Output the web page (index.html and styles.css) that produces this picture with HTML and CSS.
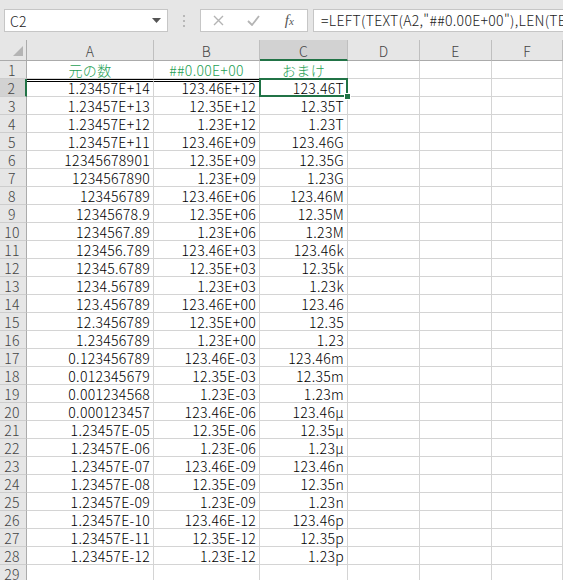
FILE: index.html
```html
<!DOCTYPE html>
<html lang="ja">
<head>
    <meta charset="UTF-8">
    <title>Sheet1</title>
    <link rel="stylesheet" href="styles.css">
</head>
<body>
    <div class="toolbar">
        <div class="name-box">
            <span>C2</span>
            <svg width="9" height="5" viewBox="0 0 9 5"><polygon points="0,0 9,0 4.5,5" fill="#555"/></svg>
        </div>
        <div class="grip">
            <svg width="3" height="12" viewBox="0 0 3 12"><rect x="0" y="0" width="2" height="2" fill="#b8b8b8"/><rect x="0" y="5" width="2" height="2" fill="#b8b8b8"/><rect x="0" y="10" width="2" height="2" fill="#b8b8b8"/></svg>
        </div>
        <div class="fx-buttons">
            <svg width="11" height="11" viewBox="0 0 11 11"><path d="M1 1 L10 10 M10 1 L1 10" stroke="#b4b4b4" stroke-width="1.4" fill="none"/></svg>
            <svg width="13" height="11" viewBox="0 0 13 11"><path d="M1 6 L5 10 L12 1" stroke="#b4b4b4" stroke-width="1.8" fill="none"/></svg>
            <span class="fx"><i>f</i><i class="sub">x</i></span>
        </div>
        <div class="formula">=LEFT(TEXT(A2,"##0.00E+00"),LEN(TEXT(A2,"##0.00E+00"))-4)</div>
    </div>

    <div class="sheet">
        <div class="row head">
            <div class="corner"><svg width="10" height="10" viewBox="0 0 10 10"><polygon points="10,0 10,10 0,10" fill="#b4b4b4"/></svg></div>
            <div>A</div><div>B</div><div class="sel">C</div><div>D</div><div>E</div><div>F</div>
        </div>
        <div class="row r1">
            <div class="rh">1</div><div class="title">元の数</div><div class="title">##0.00E+00</div><div class="title">おまけ</div><div></div><div></div><div></div>
        </div>
        <div class="row r2">
            <div class="rh sel">2</div><div>1.23457E+14</div><div>123.46E+12</div><div class="active">123.46T</div><div></div><div></div><div></div>
        </div>
        <div class="row"><div class="rh">3</div><div>1.23457E+13</div><div>12.35E+12</div><div>12.35T</div><div></div><div></div><div></div></div>
        <div class="row"><div class="rh">4</div><div>1.23457E+12</div><div>1.23E+12</div><div>1.23T</div><div></div><div></div><div></div></div>
        <div class="row"><div class="rh">5</div><div>1.23457E+11</div><div>123.46E+09</div><div>123.46G</div><div></div><div></div><div></div></div>
        <div class="row"><div class="rh">6</div><div>12345678901</div><div>12.35E+09</div><div>12.35G</div><div></div><div></div><div></div></div>
        <div class="row"><div class="rh">7</div><div>1234567890</div><div>1.23E+09</div><div>1.23G</div><div></div><div></div><div></div></div>
        <div class="row"><div class="rh">8</div><div>123456789</div><div>123.46E+06</div><div>123.46M</div><div></div><div></div><div></div></div>
        <div class="row"><div class="rh">9</div><div>12345678.9</div><div>12.35E+06</div><div>12.35M</div><div></div><div></div><div></div></div>
        <div class="row"><div class="rh">10</div><div>1234567.89</div><div>1.23E+06</div><div>1.23M</div><div></div><div></div><div></div></div>
        <div class="row"><div class="rh">11</div><div>123456.789</div><div>123.46E+03</div><div>123.46k</div><div></div><div></div><div></div></div>
        <div class="row"><div class="rh">12</div><div>12345.6789</div><div>12.35E+03</div><div>12.35k</div><div></div><div></div><div></div></div>
        <div class="row"><div class="rh">13</div><div>1234.56789</div><div>1.23E+03</div><div>1.23k</div><div></div><div></div><div></div></div>
        <div class="row"><div class="rh">14</div><div>123.456789</div><div>123.46E+00</div><div>123.46</div><div></div><div></div><div></div></div>
        <div class="row"><div class="rh">15</div><div>12.3456789</div><div>12.35E+00</div><div>12.35</div><div></div><div></div><div></div></div>
        <div class="row"><div class="rh">16</div><div>1.23456789</div><div>1.23E+00</div><div>1.23</div><div></div><div></div><div></div></div>
        <div class="row"><div class="rh">17</div><div>0.123456789</div><div>123.46E-03</div><div>123.46m</div><div></div><div></div><div></div></div>
        <div class="row"><div class="rh">18</div><div>0.012345679</div><div>12.35E-03</div><div>12.35m</div><div></div><div></div><div></div></div>
        <div class="row"><div class="rh">19</div><div>0.001234568</div><div>1.23E-03</div><div>1.23m</div><div></div><div></div><div></div></div>
        <div class="row"><div class="rh">20</div><div>0.000123457</div><div>123.46E-06</div><div>123.46μ</div><div></div><div></div><div></div></div>
        <div class="row"><div class="rh">21</div><div>1.23457E-05</div><div>12.35E-06</div><div>12.35μ</div><div></div><div></div><div></div></div>
        <div class="row"><div class="rh">22</div><div>1.23457E-06</div><div>1.23E-06</div><div>1.23μ</div><div></div><div></div><div></div></div>
        <div class="row"><div class="rh">23</div><div>1.23457E-07</div><div>123.46E-09</div><div>123.46n</div><div></div><div></div><div></div></div>
        <div class="row"><div class="rh">24</div><div>1.23457E-08</div><div>12.35E-09</div><div>12.35n</div><div></div><div></div><div></div></div>
        <div class="row"><div class="rh">25</div><div>1.23457E-09</div><div>1.23E-09</div><div>1.23n</div><div></div><div></div><div></div></div>
        <div class="row"><div class="rh">26</div><div>1.23457E-10</div><div>123.46E-12</div><div>123.46p</div><div></div><div></div><div></div></div>
        <div class="row"><div class="rh">27</div><div>1.23457E-11</div><div>12.35E-12</div><div>12.35p</div><div></div><div></div><div></div></div>
        <div class="row"><div class="rh">28</div><div>1.23457E-12</div><div>1.23E-12</div><div>1.23p</div><div></div><div></div><div></div></div>
        <div class="row"><div class="rh">29</div><div></div><div></div><div></div><div></div><div></div><div></div></div>
    </div>
</body>
</html>
```

FILE: styles.css
```css
body {
    margin: 0;
    background: #fff;
    font-family: "Noto Sans CJK JP", "Noto Sans", sans-serif;
    font-weight: 300;
    font-size: 14px;
    letter-spacing: 0.3px;
    color: #000;
    overflow: hidden;
}

/* formula bar */
.toolbar {
    display: flex;
    align-items: flex-start;
    height: 40px;
    box-sizing: border-box;
    padding: 9px 0 0 4px;
    background: #e6e6e6;
}

.name-box {
    width: 164px;
    height: 23px;
    box-sizing: border-box;
    background: #fff;
    border: 1px solid #c6c6c6;
    display: flex;
    align-items: center;
    justify-content: space-between;
    padding: 0 6px 0 5px;
    color: #222;
}

.grip {
    width: 32px;
    display: flex;
    justify-content: center;
    padding-top: 6px;
}

.fx-buttons {
    width: 108px;
    height: 23px;
    box-sizing: border-box;
    background: #fff;
    border: 1px solid #c6c6c6;
    display: grid;
    grid-template-columns: repeat(3, 1fr);
    align-items: center;
    justify-items: center;
}

.fx {
    font-family: "Liberation Serif", serif;
    font-weight: normal;
    letter-spacing: 0;
    color: #555;
    font-size: 15px;
    line-height: 1;
}

.fx .sub {
    font-size: 11px;
}

.formula {
    flex: 1;
    margin-left: 5px;
    height: 23px;
    box-sizing: border-box;
    background: #fff;
    border: 1px solid #c6c6c6;
    border-right: none;
    padding-left: 7px;
    line-height: 21px;
    white-space: nowrap;
    overflow: hidden;
    color: #222;
}

/* grid */
.row {
    display: grid;
    grid-template-columns: 27px 127px 106px 88px 72px 72px 71px;
    grid-template-rows: 18px;
    height: 18px;
}

.row > div {
    box-sizing: border-box;
    border-right: 1px solid #d4d4d4;
    border-bottom: 1px solid #d4d4d4;
    text-align: right;
    padding: 2px 3px 0 0;
    line-height: 15px;
    white-space: nowrap;
}

.row.head {
    grid-template-rows: 21px;
    height: 21px;
    background: #e6e6e6;
}

.row.head > div {
    text-align: center;
    padding: 2px 0 0 0;
    border-right-color: #bfbfbf;
    border-bottom-color: #ababab;
    line-height: 18px;
    color: #444;
}

.row.head > .sel {
    background: #d2d2d2;
    border-bottom: 2px solid #217346;
}

.row.head > .corner {
    display: flex;
    align-items: flex-end;
    justify-content: flex-end;
    padding: 0 3px 4px 0;
    border-right-color: #ababab;
}

.row > .rh {
    background: #e6e6e6;
    text-align: center;
    padding-right: 2px;
    color: #444;
    border-right-color: #ababab;
    border-bottom-color: #cdcdcd;
}

.row > .rh.sel {
    background: #d2d2d2;
    border-right: 2px solid #217346;
}

.row > .title {
    text-align: center;
    padding-right: 0;
    color: #1f9f55;
}

/* double line under the titles */
.r2 > div:nth-child(2),
.r2 > div:nth-child(3) {
    border-top: 3px double #000;
    padding-top: 0;
    line-height: 13px;
}

.active {
    position: relative;
}

.active::after {
    content: "";
    position: absolute;
    top: -1px;
    left: -1px;
    right: -1px;
    bottom: -1px;
    border: 2px solid #217346;
}

.active::before {
    content: "";
    position: absolute;
    right: -4px;
    bottom: -4px;
    width: 5px;
    height: 5px;
    background: #217346;
    border: 1px solid #fff;
    z-index: 1;
}
```
